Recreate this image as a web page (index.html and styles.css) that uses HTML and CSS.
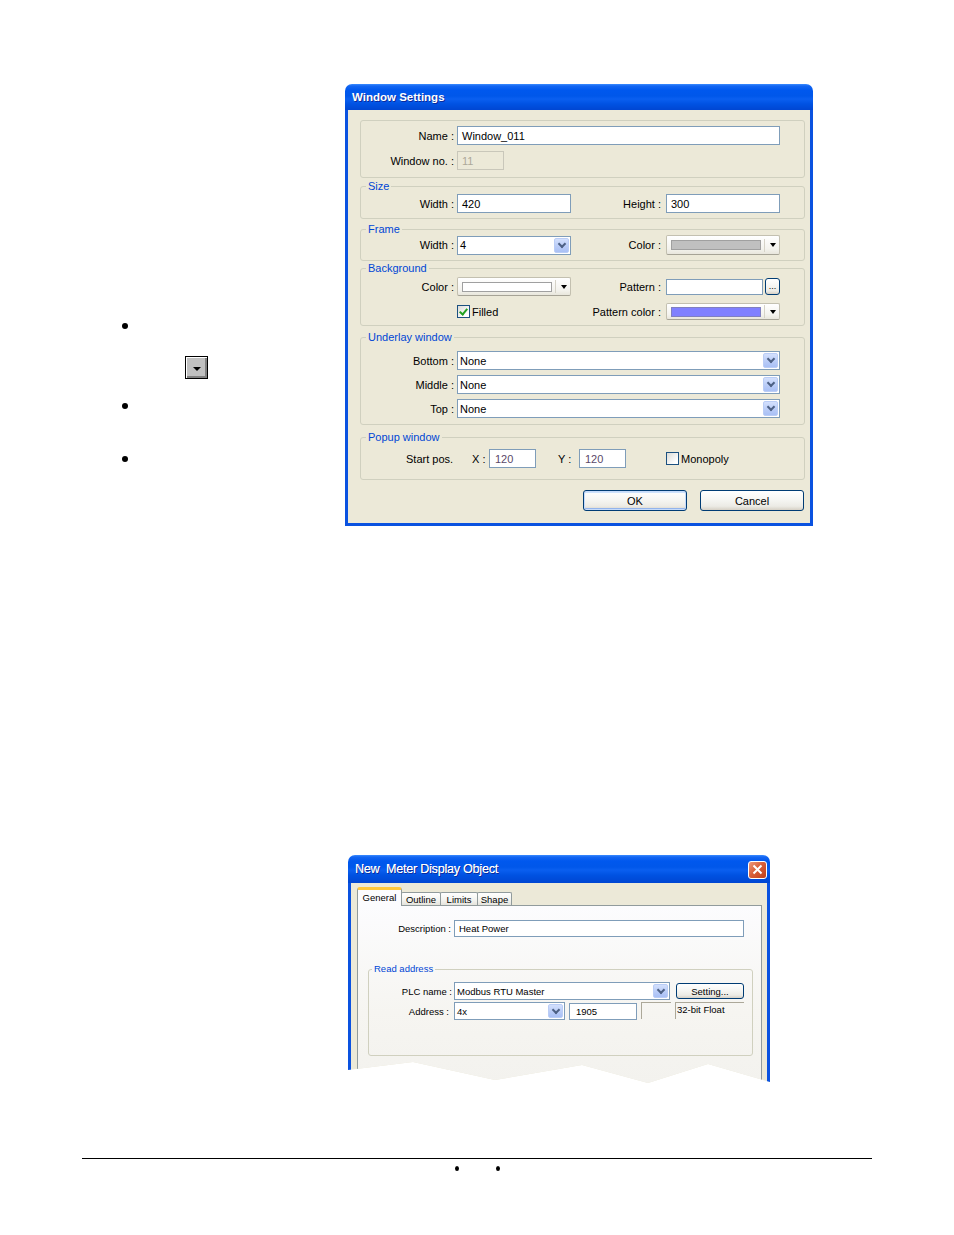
FILE: index.html
```html
<!DOCTYPE html>
<html lang="en">
<head>
  <meta charset="UTF-8">
  <meta name="viewport" content="width=device-width, initial-scale=1.0">
  <title>Window Settings</title>
  <link rel="stylesheet" href="styles.css">
</head>
<body>
  <div class="page">
    <div class="top">
      <div class="notes">
        <span class="dot"></span>
        <span class="drop-btn"><i></i></span>
        <span class="dot dot-2"></span>
        <span class="dot dot-3"></span>
      </div>

      <div class="win win-settings">
        <div class="win-title">Window Settings</div>
        <div class="win-body">
          <div class="group g-name">
            <div class="rows">
              <div class="lbl">Name :</div>
              <div class="tb span">Window_011</div>
              <div class="lbl">Window no. :</div>
              <div class="tb tb-off tb-small">11</div>
            </div>
          </div>

          <fieldset class="group g-size">
            <legend>Size</legend>
            <div class="rows">
              <div class="lbl">Width :</div>
              <div class="tb">420</div>
              <div class="lbl lbl-r">Height :</div>
              <div class="tb">300</div>
            </div>
          </fieldset>

          <fieldset class="group g-frame">
            <legend>Frame</legend>
            <div class="rows">
              <div class="lbl">Width :</div>
              <div class="cb"><span class="cb-val">4</span><span class="cb-btn"></span></div>
              <div class="lbl lbl-r">Color :</div>
              <div class="clr"><span class="swatch sw-gray"></span><span class="clr-sep"></span><span class="tri"></span></div>
            </div>
          </fieldset>

          <fieldset class="group g-bg">
            <legend>Background</legend>
            <div class="rows">
              <div class="lbl">Color :</div>
              <div class="clr clr-short"><span class="swatch sw-white"></span><span class="clr-sep"></span><span class="tri"></span></div>
              <div class="lbl lbl-r">Pattern :</div>
              <div class="pick">
                <div class="tb tb-pattern"></div>
                <button class="btn btn-dots">...</button>
              </div>
              <div></div>
              <label class="chk"><span class="chk-box is-on"></span>Filled</label>
              <div class="lbl lbl-r">Pattern color :</div>
              <div class="clr clr-thin"><span class="swatch sw-blue"></span><span class="clr-sep"></span><span class="tri"></span></div>
            </div>
          </fieldset>

          <fieldset class="group g-under">
            <legend>Underlay window</legend>
            <div class="rows">
              <div class="lbl">Bottom :</div>
              <div class="cb span"><span class="cb-val">None</span><span class="cb-btn"></span></div>
              <div class="lbl">Middle :</div>
              <div class="cb span"><span class="cb-val">None</span><span class="cb-btn"></span></div>
              <div class="lbl">Top :</div>
              <div class="cb span"><span class="cb-val">None</span><span class="cb-btn"></span></div>
            </div>
          </fieldset>

          <fieldset class="group g-popup">
            <legend>Popup window</legend>
            <div class="popup-row">
              <span class="pp-start">Start pos.</span>
              <span class="pp-x">X :</span>
              <div class="tb tb-pos">120</div>
              <span class="pp-y">Y :</span>
              <div class="tb tb-pos">120</div>
              <label class="chk pp-chk"><span class="chk-box"></span>Monopoly</label>
            </div>
          </fieldset>

          <div class="win-actions">
            <button class="btn btn-default">OK</button>
            <button class="btn">Cancel</button>
          </div>
        </div>
      </div>
    </div>

    <div class="figure-2">
      <div class="win win-meter">
        <div class="win-title">
          <span class="title-text">New  Meter Display Object</span>
          <span class="x-btn"><svg width="11" height="11" viewBox="0 0 11 11"><path d="M1.5 1.5l8 8M9.5 1.5l-8 8" stroke="#fff" stroke-width="2" fill="none"/></svg></span>
        </div>
        <div class="meter-body">
          <div class="tabs">
            <span class="tab tab-on">General</span>
            <span class="tab tab-outline">Outline</span>
            <span class="tab tab-limits">Limits</span>
            <span class="tab tab-shape">Shape</span>
          </div>
          <div class="tab-panel">
            <div class="desc-row">
              <span class="m-lbl">Description :</span>
              <div class="tb m-tb m-desc">Heat Power</div>
            </div>
            <fieldset class="g-read">
              <legend>Read address</legend>
              <div class="read-row">
                <span class="m-lbl r-lbl">PLC name :</span>
                <div class="cb m-cb m-plc"><span class="cb-val">Modbus RTU Master</span><span class="cb-btn"></span></div>
                <button class="btn m-btn">Setting...</button>
              </div>
              <div class="read-row">
                <span class="m-lbl r-lbl r-lbl-addr">Address :</span>
                <div class="cb m-cb m-addr"><span class="cb-val">4x</span><span class="cb-btn"></span></div>
                <div class="tb m-tb m-num">1905</div>
                <div class="static m-blank"></div>
                <div class="static m-type">32-bit Float</div>
              </div>
            </fieldset>
          </div>
        </div>
      </div>
    </div>

    <div class="footer">
      <div class="footer-dots"><span></span><span></span></div>
    </div>
  </div>
</body>
</html>
```

FILE: styles.css
```css
*{
  margin: 0;
  padding: 0;
  box-sizing: border-box;
}
body{
  background: #fff;
  color: #000;
  font-family: "Liberation Sans", Arial, sans-serif;
}
.page{
  width: 954px;
  padding-top: 84px;
  padding-bottom: 60px;
}
.top{
  display: grid;
  grid-template-columns: 345px 468px;
  align-items: start;
}

/* left column: bullets and the small drop button */
.notes{
  display: flex;
  flex-direction: column;
  align-items: flex-start;
  padding: 239px 0 0 122px;
}
.dot{
  width: 6px;
  height: 6px;
  border-radius: 50%;
  background: #000;
}
.dot-2{
  margin-top: 24px;
}
.dot-3{
  margin-top: 47px;
}
.drop-btn{
  display: flex;
  align-items: center;
  justify-content: center;
  width: 23px;
  height: 23px;
  margin: 27px 0 0 63px;
  background: #c0c0c0;
  border: 1px solid #000;
  box-shadow: inset 1px 1px 0 #fff, inset -2px -2px 0 #808080;
}
.drop-btn i{
  width: 0;
  height: 0;
  margin-top: 2px;
  border-left: 4px solid transparent;
  border-right: 4px solid transparent;
  border-top: 4px solid #000;
}

/* xp window frame */
.win{
  display: flex;
  flex-direction: column;
}
.win-title{
  display: flex;
  align-items: center;
  color: #fff;
  border-radius: 7px 7px 0 0;
  background: linear-gradient(#3b8cff 0, #1466f2 2px, #0058ee 6px, #0057ea 12px, #0a5ff0 15px, #0052e2 20px, #0046d2 100%);
  text-shadow: 1px 1px 0 #0b2a9a;
}
.win-settings{
  width: 468px;
  height: 442px;
}
.win-settings .win-title{
  height: 26px;
  padding-left: 7px;
  font-size: 11.5px;
  font-weight: bold;
}
.win-body{
  flex: 1;
  display: flex;
  flex-direction: column;
  padding: 10px 5px 0 12px;
  background: #ece9d8;
  border: 3px solid #0a52e0;
  border-top: 0;
  font-size: 11px;
}

/* groups */
.group{
  border: 1px solid #d0d0bf;
  border-radius: 3px;
  min-width: 0;
}
.group legend,
.g-read legend{
  color: #0046d5;
  font-size: 11px;
  line-height: 12px;
  margin-left: 5px;
  padding: 0 2px;
}
.rows{
  display: grid;
  grid-template-columns: 96px 114px 95px 114px;
  align-items: center;
  padding-right: 24px;
}
.lbl{
  text-align: right;
  padding-right: 3px;
  white-space: nowrap;
}
.lbl-r{
  padding-right: 5px;
}
.span{
  grid-column: 2 / 5;
}
.g-name .rows{
  padding-top: 5px;
  padding-bottom: 7px;
  row-gap: 6px;
}
.g-size{
  margin-top: 2px;
}
.g-size .rows{
  padding-top: 2px;
  padding-bottom: 5px;
}
.g-frame{
  margin-top: 4px;
}
.g-frame .rows{
  padding-bottom: 5px;
}
.g-bg{
  margin-top: 1px;
}
.g-bg .rows{
  padding-top: 3px;
  padding-bottom: 5px;
  row-gap: 7px;
}
.g-under{
  margin-top: 5px;
}
.g-under .rows{
  padding-top: 8px;
  padding-bottom: 6px;
  row-gap: 5px;
}
.g-popup{
  margin-top: 6px;
}

/* controls */
.tb{
  display: flex;
  align-items: center;
  height: 19px;
  padding: 0 4px;
  background: #fff;
  border: 1px solid #7f9db9;
  white-space: nowrap;
}
.tb-small{
  width: 47px;
}
.tb-off{
  background: #ece9d8;
  border-color: #c9c7ba;
  color: #aca899;
}
.cb{
  display: flex;
  align-items: stretch;
  height: 19px;
  background: #fff;
  border: 1px solid #7f9db9;
}
.cb-val{
  flex: 1;
  display: flex;
  align-items: center;
  padding-left: 2px;
  white-space: nowrap;
}
.cb-btn{
  display: flex;
  align-items: center;
  justify-content: center;
  width: 15px;
  margin: 1px;
  border: 1px solid #bacdf6;
  border-radius: 2px;
  background: linear-gradient(#d3e0fd, #b8cbf7 60%, #a9c0f5);
}
.cb-btn::before{
  content: '';
  width: 4px;
  height: 4px;
  margin-top: -3px;
  border-right: 2px solid #4d6185;
  border-bottom: 2px solid #4d6185;
  transform: rotate(45deg);
}
.clr{
  display: flex;
  align-items: center;
  height: 20px;
  padding: 0 3px 0 4px;
  border: 1px solid #c3c0b0;
  border-bottom-color: #a6a396;
  border-radius: 2px;
  background: linear-gradient(#fff, #f4f3ee 70%, #e8e6dc);
}
.clr-short{
  height: 19px;
}
.clr-thin{
  height: 17px;
}
.swatch{
  flex: 1;
  height: 10px;
  border: 1px solid #a0a0a0;
}
.sw-gray{
  background: #c0c0c0;
}
.sw-white{
  background: #fff;
}
.sw-blue{
  background: #8080ff;
  border-color: #8080c0;
}
.clr-sep{
  width: 1px;
  height: 13px;
  margin: 0 5px 0 3px;
  background: #d6d3c8;
}
.tri{
  width: 0;
  height: 0;
  border-left: 3.5px solid transparent;
  border-right: 3.5px solid transparent;
  border-top: 4px solid #000;
}
.pick{
  display: flex;
  align-items: center;
  gap: 2px;
}
.tb-pattern{
  flex: 1;
  height: 16px;
}
.chk{
  display: flex;
  align-items: center;
  gap: 2px;
  white-space: nowrap;
}
.chk-box{
  display: flex;
  align-items: center;
  justify-content: center;
  width: 13px;
  height: 13px;
  border: 1px solid #1c5180;
  background: linear-gradient(135deg, #dcdcd7, #fff 80%);
}
.chk-box.is-on::before{
  content: '';
  width: 3px;
  height: 6px;
  margin-top: -2px;
  border-right: 2px solid #21a121;
  border-bottom: 2px solid #21a121;
  transform: rotate(40deg);
}

/* popup row */
.popup-row{
  display: flex;
  align-items: center;
  padding: 6px 0 11px 45px;
}
.pp-start{
  width: 66px;
  white-space: nowrap;
}
.pp-x{
  width: 17px;
}
.pp-y{
  width: 21px;
  margin-left: 22px;
}
.tb-pos{
  width: 47px;
  padding-left: 5px;
  color: #5b4868;
}
.pp-chk{
  margin-left: 40px;
}

/* buttons */
.btn{
  height: 21px;
  font-family: "Liberation Sans", Arial, sans-serif;
  font-size: 11px;
  color: #000;
  border: 1px solid #003c74;
  border-radius: 3px;
  background: linear-gradient(#fff 0%, #f6f6f3 45%, #ecebe5 80%, #d6d0c5 100%);
}
.btn-dots{
  display: flex;
  align-items: flex-end;
  justify-content: center;
  width: 15px;
  height: 17px;
  font-size: 9px;
  line-height: 9px;
  padding: 0 0 3px;
}
.win-actions{
  display: flex;
  justify-content: flex-end;
  gap: 13px;
  margin-top: 10px;
  padding-right: 1px;
}
.win-actions .btn{
  width: 104px;
}
.btn-default{
  box-shadow: inset 0 0 0 1px #c6dbfa, inset 0 -2px 0 #93b4ec, inset 0 1px 0 1px #cee2fc;
}

/* second figure */
.figure-2{
  margin: 329px 0 0 348px;
}
.win-meter{
  width: 422px;
  height: 228px;
  clip-path: polygon(0 0, 100% 0, 100% 227px, 360px 209px, 300px 228px, 234px 210px, 147px 225px, 65px 207px, 0 215px);
}
.win-meter .win-title{
  justify-content: space-between;
  height: 28px;
  padding: 0 3px 0 7px;
  font-size: 12.5px;
}
.title-text{
  white-space: pre;
  letter-spacing: -0.2px;
  text-shadow: 1px 1px 0 #0b2a9a, 0.4px 0 0 #fff;
}
.x-btn{
  display: flex;
  align-items: center;
  justify-content: center;
  width: 19px;
  height: 18px;
  margin-top: 1px;
  border: 1px solid #fff;
  border-radius: 3px;
  background: linear-gradient(135deg, #ec9a7e, #d9603a 45%, #c1401a);
}
.meter-body{
  flex: 1;
  display: flex;
  flex-direction: column;
  padding: 4px 5px 0 6px;
  background: #ece9d8;
  border-left: 3px solid #0a52e0;
  border-right: 3px solid #0a52e0;
  font-size: 9.5px;
}
.tabs{
  display: flex;
  align-items: flex-end;
  height: 18px;
  position: relative;
  z-index: 1;
}
.tab{
  display: flex;
  align-items: center;
  justify-content: center;
  height: 13px;
  margin-left: -1px;
  border: 1px solid #919b9c;
  border-bottom: 0;
  border-radius: 2px 2px 0 0;
  background: linear-gradient(#fff, #f3f3ef 60%, #e4e3dc);
  white-space: nowrap;
}
.tab-on{
  width: 45px;
  height: 19px;
  margin-left: 0;
  margin-bottom: -1px;
  padding-bottom: 2px;
  border-top: 3px solid #ffc83c;
  border-radius: 3px 3px 0 0;
  background: #fcfcfe;
  position: relative;
  z-index: 1;
}
.tab-outline{
  width: 40px;
}
.tab-limits{
  width: 38px;
}
.tab-shape{
  width: 35px;
}
.tab-panel{
  flex: 1;
  padding-top: 14px;
  border: 1px solid #919b9c;
  border-bottom: 0;
  background: linear-gradient(#fcfcfe, #f6f5f1 60%, #f3f2ee);
}
.desc-row{
  display: flex;
  align-items: center;
}
.m-lbl{
  width: 96px;
  padding-right: 3px;
  text-align: right;
  white-space: nowrap;
}
.m-tb{
  height: 17px;
}
.m-desc{
  width: 290px;
}
.g-read{
  margin: 26px 8px 0 10px;
  border: 1px solid #d0d0bf;
  border-radius: 3px;
  min-width: 0;
}
.g-read legend{
  font-size: 9.5px;
  margin-left: 3px;
}
.read-row{
  display: flex;
  align-items: center;
  gap: 4px;
  height: 18px;
  margin-bottom: 2px;
}
.read-row:first-of-type{
  margin-top: 7px;
}
.read-row:last-child{
  margin-bottom: 35px;
}
.r-lbl{
  width: 85px;
  margin-right: -4px;
  padding-right: 2px;
}
.r-lbl-addr{
  padding-right: 5px;
}
.m-cb{
  height: 18px;
}
.m-plc{
  width: 216px;
  margin-right: 2px;
}
.m-btn{
  width: 68px;
  height: 16px;
  font-size: 9.5px;
}
.m-addr{
  width: 111px;
}
.m-num{
  width: 68px;
  padding-left: 6px;
}
.static{
  align-self: flex-start;
  height: 17px;
  border-top: 1px solid #aca899;
  border-left: 1px solid #aca899;
  white-space: nowrap;
}
.m-blank{
  width: 30px;
}
.m-type{
  width: 69px;
  padding: 1px 0 0 1px;
}

/* page footer */
.footer{
  margin: 75px 82px 0;
  border-top: 1px solid #000;
}
.footer-dots{
  display: flex;
  justify-content: center;
  gap: 37px;
  padding-top: 7px;
}
.footer-dots span{
  width: 4px;
  height: 5px;
  border-radius: 50%;
  background: #000;
}
```
